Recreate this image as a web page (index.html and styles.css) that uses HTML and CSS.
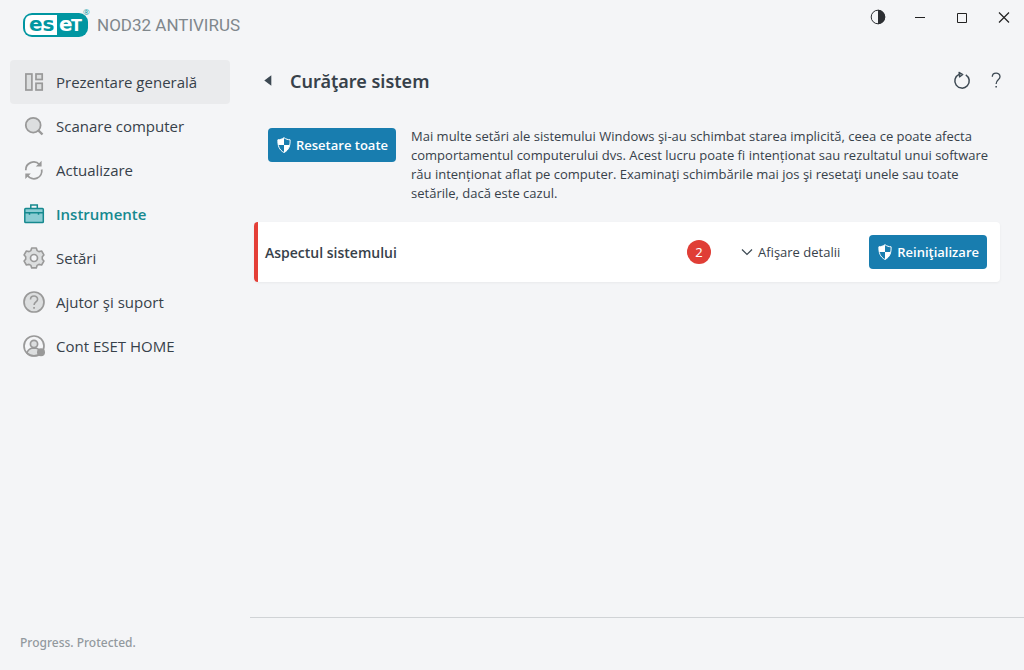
FILE: index.html
```html
<!DOCTYPE html>
<html lang="ro">
<head>
<meta charset="utf-8">
<meta name="viewport" content="width=device-width, initial-scale=1">
<title>ESET NOD32 Antivirus</title>
<link rel="stylesheet" href="styles.css">
</head>
<body>
<svg width="0" height="0" class="defs" aria-hidden="true">
  <symbol id="shield" viewBox="0 0 14 16">
    <path d="M7 .7C5 2.200 3 2.700.9 2.800 .7 8.500 2 13 7 15.500c5-2.500 6.300-7 6.100-12.700C11 2.700 9 2.200 7 .7z" fill="none" stroke="#fff" stroke-width="1"/>
    <path d="M7 .7C5 2.200 3 2.700.9 2.800c-.1 2 0 3.600.4 5.200H7zM7 8h5.700c-.7 3.300-2.500 6-5.700 7.500z" fill="#fff"/>
  </symbol>
</svg>
<div class="app">
  <header class="titlebar">
    <div class="brand">
      <svg class="logo" width="70" height="36" viewBox="0 -4 70 36" role="img" aria-label="ESET">
        <rect x="1" y="5" width="65" height="24" rx="9" fill="#0096a1"/>
        <path d="M10 7H35V27H10Q3 27 3 20V14Q3 7 10 7z" fill="#fff"/>
        <text x="7" y="23" class="logo-text teal">es</text>
        <text x="37" y="23" class="logo-text white">e</text>
        <text x="49" y="23" class="logo-text cap white">T</text>
        <text x="61" y="7" class="logo-mark">®</text>
      </svg>
      <span class="product">NOD32 ANTIVIRUS</span>
    </div>
    <div class="window-controls">
      <button aria-label="Contrast"><svg width="16" height="16" viewBox="0 0 16 16"><circle cx="8" cy="8" r="6.800" fill="none" stroke="#2c2f33" stroke-width="1"/><path d="M8 .8a7.200 7.200 0 0 1 0 14.400z" fill="#2c2f33"/></svg></button>
      <button aria-label="Minimizare"><svg width="16" height="16" viewBox="0 0 16 16"><path d="M3 8.500h10" stroke="#222"/></svg></button>
      <button aria-label="Maximizare"><svg width="16" height="16" viewBox="0 0 16 16"><path d="M3.500 4.500h9v9h-9z" fill="none" stroke="#222"/></svg></button>
      <button aria-label="Închidere"><svg width="16" height="16" viewBox="0 0 16 16"><path d="M3 3.500l10 10M13 3.500l-10 10" stroke="#222" stroke-width="1.200"/></svg></button>
    </div>
  </header>

  <aside class="sidebar">
    <nav class="nav">
      <a class="nav-item hovered" href="#"><svg class="icon" viewBox="0 0 24 24"><g fill="#dcdedf" stroke="#999" stroke-width="1.700"><rect x="3.900" y="4" width="6" height="16"/><rect x="14" y="4" width="6.200" height="5.500"/><rect x="14" y="13.300" width="6.200" height="6.700"/></g></svg>Prezentare generală</a>
      <a class="nav-item" href="#"><svg class="icon" viewBox="0 0 24 24"><circle cx="11.200" cy="11.200" r="7.400" fill="#dcdedf" stroke="#999" stroke-width="1.800"/><path d="M16.300 16.300l4.200 4.200" stroke="#999" stroke-width="2.400"/></svg>Scanare computer</a>
      <a class="nav-item" href="#"><svg class="icon" viewBox="0 0 24 24"><g fill="none" stroke="#999" stroke-width="1.800"><path d="M3.800 12.300A7.900 7.900 0 0 1 17.500 6.500"/><path d="M19.700 11.500A7.900 7.900 0 0 1 5.500 17.500"/></g><path d="M19.600 2.800v5.800h-5.800zM3.300 15.600h5.500l-5.500 5.500z" fill="#999"/></svg>Actualizare</a>
      <a class="nav-item active" href="#"><svg class="icon" viewBox="0 0 24 24"><g fill="#8bccd3" stroke="#16898f" stroke-width="1.500"><path d="M8.800 6.500V3h6.500v3.500" fill="none"/><rect x="2.800" y="6.600" width="18.500" height="13.900" rx=".8"/><path d="M3 10.700h18M7.500 10.700v2M16.500 10.700v2"/></g></svg>Instrumente</a>
      <a class="nav-item" href="#"><svg class="icon" viewBox="0 0 24 24"><path d="M9.700 2h4.600l.8 2.600 1.800 1 2.700-.6 2.300 3.900-1.600 1.900v2.400l1.600 1.900-2.300 3.900-2.700-.6-1.800 1-.8 2.500H9.700l-.8-2.500-1.800-1-2.700.6-2.300-3.900 1.600-1.900v-2.400L2.100 8.900 4.400 5l2.700.6 1.800-1z" fill="#dcdedf" stroke="#999" stroke-width="1.600" stroke-linejoin="round"/><circle cx="12" cy="12" r="3.500" fill="#f4f5f7" stroke="#999" stroke-width="1.700"/></svg>Setări</a>
      <a class="nav-item" href="#"><svg class="icon" viewBox="0 0 24 24"><circle cx="12" cy="12" r="10" fill="#dcdedf" stroke="#999" stroke-width="1.700"/><path d="M8.500 9.500C8.500 4.800 15.600 5 15.600 9.200c0 2.700-3.500 2.700-3.500 5.800" fill="none" stroke="#999" stroke-width="1.600"/><path d="M11.200 17h1.700v1.700h-1.700z" fill="#999"/></svg>Ajutor şi suport</a>
      <a class="nav-item" href="#"><svg class="icon" viewBox="0 0 24 24"><circle cx="12" cy="12" r="10" fill="#f4f5f7" stroke="#999" stroke-width="1.700"/><path d="M5 19c.5-3 2.500-4 4.500-4.800h5c2 .8 4 1.800 4.500 4.800-4 3.500-10 3.500-14 0z" fill="#dcdedf" stroke="#999" stroke-width="1.500"/><circle cx="12" cy="10" r="3.600" fill="#dcdedf" stroke="#999" stroke-width="1.700"/><circle cx="19" cy="18.300" r="4" fill="#999"/></svg>Cont ESET HOME</a>
    </nav>
    <p class="tagline">Progress. Protected.</p>
  </aside>

  <main class="main">
    <div class="page-head">
      <button class="back" aria-label="Înapoi"><svg width="8" height="12" viewBox="0 0 8 12"><path d="M.3 5.500L7.300.2v10.600z" fill="#3c4852"/></svg></button>
      <h1>Curăţare sistem</h1>
      <div class="page-tools">
        <button aria-label="Reîmprospătare"><svg width="20" height="20" viewBox="0 0 20 20"><path d="M13.800 3.800A7.200 7.200 0 1 1 7 3.400" fill="none" stroke="#3c4852" stroke-width="1.500"/><path d="M7 1.300l3.800 2.300-3.300 2.400z" fill="#8b949a" stroke="#3c4852" stroke-width="1.200" stroke-linejoin="round"/></svg></button>
        <button aria-label="Ajutor"><svg width="20" height="20" viewBox="0 0 20 20"><path d="M6.300 5.800C6.300 1 14 1 14 5.700c0 3.200-3.900 3.200-3.900 7.300" fill="none" stroke="#3c4852" stroke-width="1.300"/><path d="M9.400 15h1.500v1.500H9.400z" fill="#3c4852"/></svg></button>
      </div>
    </div>
    <section class="intro">
      <button class="btn"><svg width="14" height="16"><use href="#shield"/></svg>Resetare toate</button>
      <p>Mai multe setări ale sistemului Windows şi-au schimbat starea implicită, ceea ce poate afecta comportamentul computerului dvs. Acest lucru poate fi intenționat sau rezultatul unui software rău intenționat aflat pe computer. Examinaţi schimbările mai jos şi resetaţi unele sau toate setările, dacă este cazul.</p>
    </section>
    <section class="card">
      <h2>Aspectul sistemului</h2>
      <span class="count">2</span>
      <button class="details"><svg width="12" height="8" viewBox="0 0 12 8"><path d="M1 1.500l5 5 5-5" fill="none" stroke="#3c4852" stroke-width="1.200"/></svg>Afişare detalii</button>
      <button class="btn"><svg width="14" height="16"><use href="#shield"/></svg>Reiniţializare</button>
    </section>
  </main>
</div>
</body>
</html>
```

FILE: styles.css
```css
* { box-sizing: border-box; }
body {
  margin: 0;
  background: #f4f5f7;
  color: #37414a;
  font-family: "Noto Sans", "Open Sans", sans-serif;
  font-size: 13px;
  /* keeps the cedilla forms of ş and ţ */
  font-feature-settings: "locl" 0;
}
h1, h2, p { margin: 0; }
button {
  border: 0;
  padding: 0;
  background: none;
  color: inherit;
  font: inherit;
  font-feature-settings: inherit;
  display: flex;
  align-items: center;
}
svg { flex: none; display: block; }
.defs { position: absolute; }
.app {
  min-height: 100vh;
  display: grid;
  grid-template: 60px 1fr / 250px 1fr;
}
.titlebar {
  grid-column: 1 / 3;
  display: flex;
  justify-content: space-between;
  align-items: flex-start;
  padding: 4px 12px 0 22px;
}
.brand { display: flex; align-items: flex-end; gap: 5px; }
.logo { overflow: visible; }
.logo-text { font: bold 20px "DejaVu Sans", sans-serif; }
.logo-text.cap { font-size: 16px; }
.logo-mark { font: 8px "Open Sans", sans-serif; fill: #0096a1; }
.teal { fill: #0096a1; }
.white { fill: #fff; }
.product { color: #80878c; font: 17px/30px Roboto, sans-serif; }
.window-controls { display: flex; gap: 26px; padding-top: 5px; }
.sidebar { display: flex; flex-direction: column; justify-content: space-between; padding: 0 20px 18px 10px; }
.nav { display: flex; flex-direction: column; }
.nav-item {
  display: flex;
  align-items: center;
  gap: 10px;
  height: 44px;
  padding: 0 12px;
  border-radius: 4px;
  color: #37414a;
  font-family: "Open Sans", sans-serif;
  font-size: 15px;
  text-decoration: none;
}
.hovered { background: #eaebed; }
.active { color: #16898f; font-weight: 600; }
.icon { width: 24px; height: 24px; }
.tagline { padding-left: 10px; color: #92999e; font: 500 12px/18px "Noto Sans", sans-serif; }
.main { display: flex; flex-direction: column; margin-bottom: 52px; border-bottom: 1px solid #d0d3d6; }
.page-head { display: flex; align-items: center; height: 42px; padding: 0 18px 0 14px; }
h1 { margin-left: 18px; font-size: 18px; font-weight: 600; }
.page-tools { display: flex; gap: 14px; margin-left: auto; }
.intro { display: flex; align-items: flex-start; gap: 15px; padding: 25px 24px 19px 18px; }
.intro .btn { margin-top: 1px; }
.intro p { font-family: "Open Sans", sans-serif; line-height: 19px; }
.btn {
  flex: none;
  gap: 5px;
  height: 34px;
  padding: 0 8px 0 9px;
  border-radius: 4px;
  background: #187daf;
  color: #fff;
  font-family: "Open Sans", sans-serif;
  font-weight: 600;
}
.card {
  display: flex;
  align-items: center;
  height: 60px;
  margin: 0 24px 0 4px;
  padding: 0 13px 0 7px;
  border-left: 4px solid #e43f37;
  border-radius: 4px;
  background: #fff;
  box-shadow: 0 1px 3px #0000000d;
}
h2 { flex: 1; font-family: "Open Sans", sans-serif; font-size: 14px; font-weight: 600; }
.count {
  width: 24px;
  margin-right: 30px;
  border-radius: 50%;
  background: #e03e36;
  color: #fff;
  line-height: 24px;
  text-align: center;
}
.details { gap: 5px; margin-right: 29px; font-family: "Open Sans", sans-serif; }
```
